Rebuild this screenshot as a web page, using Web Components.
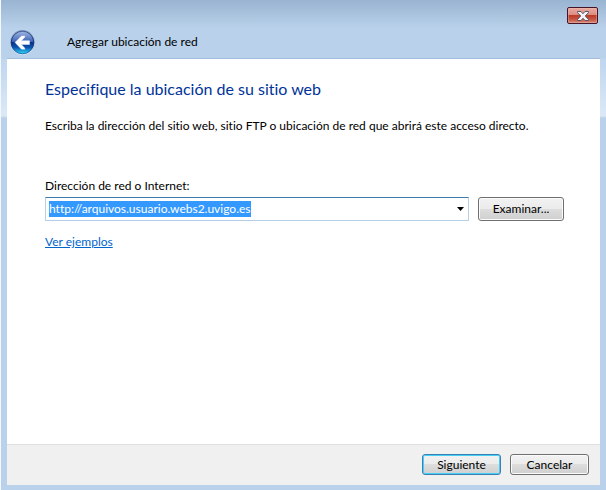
<!DOCTYPE html>
<html lang="es">
<head>
<meta charset="utf-8">
<title>Agregar ubicación de red</title>
<style>
  html, body {
    height: 100%;
    margin: 0;
  }

  body {
    font: 12px/16px Lato, "Open Sans", sans-serif;
    font-variant-ligatures: none;
    color: #000;
    background: #fff;
  }
</style>
</head>
<body>

<wizard-window>
  <back-button slot="back"></back-button>
  <span slot="title">Agregar ubicación de red</span>
  <close-button slot="close"></close-button>

  <wizard-page>
    <span slot="heading">Especifique la ubicación de su sitio web</span>
    <span slot="intro">Escriba la dirección del sitio web, sitio FTP o ubicación de red que abrirá este acceso directo.</span>
    <address-field label="Dirección de red o Internet:" value="http://arquivos.usuario.webs2.uvigo.es">
      <push-button>Examinar...</push-button>
    </address-field>
    <text-link href="#ejemplos">Ver ejemplos</text-link>
  </wizard-page>

  <push-button slot="actions" primary>Siguiente</push-button>
  <push-button slot="actions">Cancelar</push-button>
</wizard-window>

<script>
function attach(element, html) {
  const template = document.createElement('template')
  template.innerHTML = html

  const shadow = element.attachShadow({mode: 'open'})
  shadow.appendChild(template.content.cloneNode(true))

  return shadow
}

class WizardWindow extends HTMLElement {
  constructor() {
    super()
    attach(this, `
      <style>
        :host {
          display: flex;
          flex-direction: column;
          box-sizing: border-box;
          min-height: 100%;
          padding: 0 6px 5px;
          border-left: 1px solid #f4f8fc;
          background:
            linear-gradient(#99b4d1, #b9d1ea 28px, #b9d1ea 58px, #bfd6ee 59px, #dbe9f7 116px, #b9d1ea 118px);
        }

        header {
          display: grid;
          grid-template-columns: 1fr auto;
          height: 58px;
          margin: 0 -6px;
          padding: 0 8px;
          box-sizing: border-box;
          background: linear-gradient(#99b4d1, #b9d1ea 28px);
        }

        .close {
          grid-column: 2;
          height: 24px;
          padding-top: 7px;
          box-sizing: border-box;
        }

        .title {
          grid-column: 1 / -1;
          display: flex;
          align-items: center;
          gap: 31px;
          height: 36px;
        }

        .client {
          flex: 1;
          display: flex;
          flex-direction: column;
          border-top: 1px solid #a0bddc;
          background: #fff;
        }

        main {
          flex: 1;
        }

        footer {
          display: flex;
          justify-content: flex-end;
          gap: 9px;
          padding: 9px 11px 10px;
          border-top: 1px solid #dfdfdf;
          background: #f0f0f0;
        }
      </style>
      <header>
        <div class="close"><slot name="close"></slot></div>
        <div class="title"><slot name="back"></slot><slot name="title"></slot></div>
      </header>
      <div class="client">
        <main><slot></slot></main>
        <footer><slot name="actions"></slot></footer>
      </div>
    `)
  }
}

class BackButton extends HTMLElement {
  constructor() {
    super()
    attach(this, `
      <style>
        :host {
          display: block;
        }

        button {
          display: block;
          padding: 0;
          border: 0;
          background: none;
        }

        svg {
          display: block;
        }
      </style>
      <button type="button" aria-label="Atrás">
        <svg width="27" height="27" viewBox="0 0 27 27">
          <defs>
            <linearGradient id="ball" x2="0" y2="1">
              <stop offset="0" stop-color="#a3b8e2"/>
              <stop offset=".47" stop-color="#3a62b4"/>
              <stop offset=".5" stop-color="#0a2f86"/>
              <stop offset=".72" stop-color="#0b56b0"/>
              <stop offset="1" stop-color="#2fdcfb"/>
            </linearGradient>
            <linearGradient id="rim" x2="0" y2="1">
              <stop offset="0" stop-color="#7f93b5"/>
              <stop offset="1" stop-color="#dbe8f5"/>
            </linearGradient>
            <linearGradient id="edge" x2="0" y2="1">
              <stop offset="0" stop-color="#3c5c9c"/>
              <stop offset=".5" stop-color="#0c2b78"/>
              <stop offset="1" stop-color="#2370b4"/>
            </linearGradient>
          </defs>
          <circle cx="13.5" cy="13.5" r="12.5" fill="url(#rim)"/>
          <circle cx="13.5" cy="13.5" r="11.3" fill="url(#ball)" stroke="url(#edge)"/>
          <path d="M6 13.5 L12.5 7 H16 L15.5 8.5 L12.3 11.7 H20.5 V15.5 H12.3 L15.5 18.7 L16 20.2 H12.5 Z" fill="#fff" stroke="#e4edf8" stroke-width=".5" stroke-linejoin="round"/>
        </svg>
      </button>
    `)
  }
}

class CloseButton extends HTMLElement {
  constructor() {
    super()
    attach(this, `
      <style>
        :host {
          display: block;
        }

        button {
          display: flex;
          align-items: center;
          justify-content: center;
          width: 31px;
          height: 17px;
          padding: 0;
          border: 1px solid #43142a;
          border-radius: 2px;
          background: linear-gradient(#e9aaa0, #dc8c80 46%, #bc3b29 50%, #c65341 75%, #d98a78);
          box-shadow: inset 0 0 0 1px #f0bdb366;
        }
      </style>
      <button type="button" aria-label="Cerrar">
        <svg width="12" height="10" viewBox="0 0 12 10">
          <path d="M.5 .5 H4 L6 2.7 L8 .5 H11.5 V1.5 L8.3 5 L11.5 8.5 V9.5 H8 L6 7.3 L4 9.5 H.5 V8.5 L3.7 5 L.5 1.5 Z" fill="#f5f3f3" stroke="#54576a"/>
        </svg>
      </button>
    `)
  }
}

class WizardPage extends HTMLElement {
  constructor() {
    super()
    attach(this, `
      <style>
        :host {
          display: block;
          padding: 18px 36px 18px 38px;
        }

        h1 {
          margin: 0 0 17px;
          font-size: 16px;
          line-height: 24px;
          font-weight: normal;
          color: #003399;
        }

        p {
          margin: 0 0 44px;
        }
      </style>
      <h1><slot name="heading"></slot></h1>
      <p><slot name="intro"></slot></p>
      <slot></slot>
    `)
  }
}

class AddressField extends HTMLElement {
  constructor() {
    super()
    const shadow = attach(this, `
      <style>
        :host {
          display: block;
          margin-bottom: 13px;
        }

        label {
          display: block;
          margin-bottom: 3px;
        }

        .row {
          display: flex;
          align-items: center;
          gap: 9px;
        }

        .combo {
          flex: 1;
          display: flex;
          align-items: center;
          box-sizing: border-box;
          height: 24px;
          padding: 0 3px;
          border: 1px solid #b5cfe7;
          border-top-color: #3d7bad;
          border-radius: 1px;
          background: #fff;
        }

        input {
          flex: 1;
          min-width: 0;
          height: 16px;
          padding: 0;
          border: 0;
          outline: 0;
          font: inherit;
          line-height: 16px;
          color: inherit;
          background: none;
        }

        input::selection {
          color: #fff;
          background: #3399ff;
        }

        button {
          display: flex;
          padding: 4px 1px;
          border: 0;
          background: none;
        }
      </style>
      <label for="address"></label>
      <div class="row">
        <div class="combo">
          <input id="address" type="text" spellcheck="false">
          <button type="button" aria-label="Mostrar lista">
            <svg width="7" height="4" viewBox="0 0 7 4"><path d="M0 0 H7 L3.5 4 Z"/></svg>
          </button>
        </div>
        <slot></slot>
      </div>
    `)

    this.labelElement = shadow.querySelector('label')
    this.input = shadow.querySelector('input')
  }

  connectedCallback() {
    this.labelElement.textContent = this.getAttribute('label')
    this.input.value = this.getAttribute('value')
    this.input.focus()
    this.input.select()
  }
}

class TextLink extends HTMLElement {
  constructor() {
    super()
    this.link = attach(this, `
      <style>
        :host {
          display: block;
        }

        a {
          color: #0066cc;
        }
      </style>
      <a><slot></slot></a>
    `).querySelector('a')
  }

  connectedCallback() {
    this.link.href = this.getAttribute('href')
  }
}

class PushButton extends HTMLElement {
  constructor() {
    super()
    attach(this, `
      <style>
        :host {
          display: block;
        }

        button {
          display: block;
          box-sizing: border-box;
          min-width: 79px;
          height: 21px;
          padding: 0 8px;
          border: 1px solid #707070;
          border-radius: 3px;
          font: inherit;
          line-height: 18px;
          color: inherit;
          background: linear-gradient(#f2f2f2, #ebebeb 49%, #dddddd 50%, #cfcfcf);
          box-shadow: inset 0 0 0 1px #fbfbfb;
        }

        :host([primary]) button {
          border-color: #3c7fb1;
          box-shadow: inset 0 0 0 1px #46d0f7;
        }

        :host(:not([slot])) button {
          min-width: 86px;
          height: 24px;
          line-height: 22px;
        }
      </style>
      <button type="button"><slot></slot></button>
    `)
  }
}

customElements.define('wizard-window', WizardWindow)
customElements.define('back-button', BackButton)
customElements.define('close-button', CloseButton)
customElements.define('wizard-page', WizardPage)
customElements.define('address-field', AddressField)
customElements.define('text-link', TextLink)
customElements.define('push-button', PushButton)
</script>
</body>
</html>
